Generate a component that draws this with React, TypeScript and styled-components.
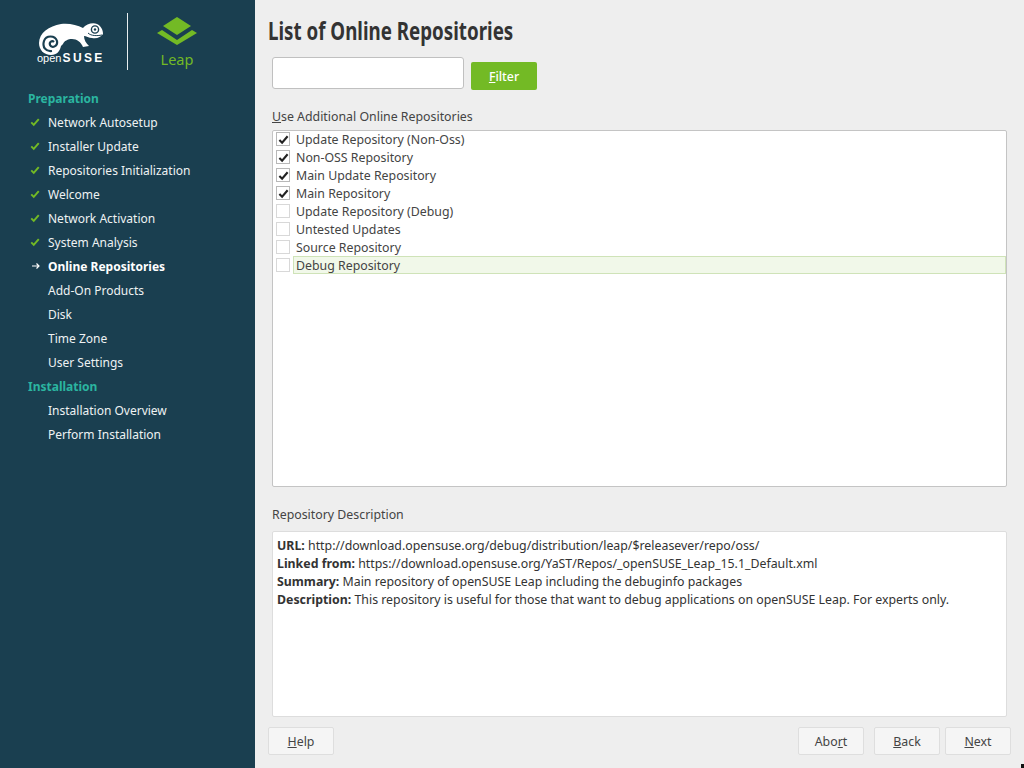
import React from 'react';
import styled, { createGlobalStyle } from 'styled-components';

const GlobalStyle = createGlobalStyle`
  html, body {
    margin: 0;
    padding: 0;
    height: 100%;
    overflow: hidden;
  }
  body {
    font-family: "Noto Sans", "Open Sans", sans-serif;
    font-size: 12.35px;
    color: #333;
    background: #eeeeee;
  }
`;

const Page = styled.div`
  position: relative;
  display: flex;
  width: 1024px;
  height: 768px;
`;

const Sidebar = styled.aside`
  width: 255px;
  flex: none;
  background: #1a3f50;
  color: #eef2f3;
  font-size: 12px;
`;

const LogoBar = styled.div`
  display: flex;
  height: 86px;
  padding-top: 13px;
  box-sizing: border-box;
`;

const SuseLogo = styled.div`
  width: 128px;
  height: 57px;
  flex: none;
  display: flex;
  flex-direction: column;
  align-items: flex-start;
  padding: 9px 0 0 37px;
  box-sizing: border-box;
  border-right: 1px solid #e8eef0;
`;

const SuseText = styled.div`
  font-family: "Liberation Sans", sans-serif;
  color: #fff;
  font-size: 11px;
  line-height: 12px;
  margin-top: -3px;
  white-space: nowrap;
  span {
    font-weight: 700;
    font-size: 12px;
    letter-spacing: 2.4px;
    margin-left: 1px;
  }
`;

const LeapLogo = styled.div`
  display: flex;
  flex-direction: column;
  align-items: center;
  margin-left: 29px;
  padding-top: 4px;
`;

const LeapText = styled.div`
  color: #73ba25;
  font-size: 14.5px;
  line-height: 18px;
  margin-top: 5px;
`;

const Steps = styled.nav`
  display: flex;
  flex-direction: column;
`;

const Heading = styled.div`
  height: 24px;
  line-height: 26px;
  padding-left: 28px;
  font-weight: 700;
  color: #2bb5a0;
`;

const Step = styled.div<{ $current?: boolean }>`
  display: flex;
  align-items: center;
  height: 24px;
  font-weight: ${(p) => (p.$current ? 700 : 400)};
  color: ${(p) => (p.$current ? '#fff' : '#eef2f3')};
`;

const StepMark = styled.span`
  width: 48px;
  flex: none;
  display: flex;
  justify-content: flex-end;
  padding-right: 8px;
  box-sizing: border-box;
`;

const Main = styled.main`
  flex: 1;
  display: flex;
  flex-direction: column;
  padding: 0 13px 13px;
  min-width: 0;
`;

const Title = styled.h1`
  margin: 0;
  height: 57px;
  line-height: 62px;
  font-size: 24.5px;
  font-weight: 700;
  color: #333;
  transform: scaleX(0.765);
  transform-origin: left center;
  white-space: nowrap;
`;

const Indented = styled.div`
  display: flex;
  flex-direction: column;
  padding: 0 4px;
`;

const FilterRow = styled.div`
  display: flex;
  align-items: flex-end;
  gap: 7px;
`;

const FilterInput = styled.input`
  width: 192px;
  height: 32px;
  box-sizing: border-box;
  background: #fff;
  border: 1px solid #c0c0c0;
  border-radius: 3px;
  outline: none;
`;

const FilterButton = styled.div`
  width: 66px;
  height: 28px;
  line-height: 30px;
  text-align: center;
  margin-bottom: -1px;
  border-radius: 2px;
  background: #73ba25;
  color: #fff;
  font-weight: 500;
`;

const Label = styled.div<{ $top: number; $bottom: number }>`
  height: 18px;
  line-height: 20px;
  margin-top: ${(p) => p.$top}px;
  margin-bottom: ${(p) => p.$bottom}px;
  color: #444;
`;

const RepoList = styled.div`
  height: 357px;
  box-sizing: border-box;
  background: #fff;
  border: 1px solid #c4c4c4;
  border-radius: 2px;
  padding: 0 0 0 3px;
`;

const RepoRows = styled.div`
  margin-top: -1px;
`;

const RepoRow = styled.div`
  display: flex;
  align-items: center;
  height: 18px;
`;

const Checkbox = styled.span<{ $checked?: boolean }>`
  width: 14px;
  height: 14px;
  flex: none;
  box-sizing: border-box;
  background: #fff;
  border: 1px solid ${(p) => (p.$checked ? '#b8b8b8' : '#d8d8d8')};
  margin-right: 3px;
  display: flex;
  align-items: center;
  justify-content: center;
`;

const RepoName = styled.span<{ $hover?: boolean }>`
  flex: 1;
  height: 18px;
  line-height: 18px;
  box-sizing: border-box;
  padding-left: 2px;
  border: 1px solid ${(p) => (p.$hover ? '#cfe3b8' : 'transparent')};
  background: ${(p) => (p.$hover ? '#f1f8e9' : 'transparent')};
  color: #444;
`;

const DescBox = styled.div`
  height: 186px;
  box-sizing: border-box;
  background: #fff;
  border: 1px solid #dddddd;
  border-radius: 2px;
  padding: 5px 4px;
  line-height: 18px;
  color: #333;
  b { font-weight: 700; }
`;

const Footer = styled.div`
  display: flex;
  align-items: center;
  margin-top: 10px;
`;

const FootButton = styled.div<{ $gap?: number }>`
  width: 66px;
  height: 28px;
  line-height: 27px;
  box-sizing: border-box;
  text-align: center;
  background: #f5f5f5;
  border: 1px solid #dedede;
  border-radius: 2px;
  color: #444;
  margin-left: ${(p) => p.$gap ?? 0}px;
`;

const Spacer = styled.div`
  flex: 1;
`;

const U = styled.span`
  text-decoration: underline;
`;

const MouseCursor = styled.div`
  position: absolute;
  left: 1021px;
  top: 764px;
  width: 3px;
  height: 4px;
  background: #111;
`;

const Check = ({ color, size }: { color: string; size: number }) => (
  <svg width={size} height={size} viewBox="0 0 12 12">
    <path d="M1.5 6.5 L4.5 9.5 L10.5 2.5" fill="none" stroke={color} strokeWidth="2.3" />
  </svg>
);

const Arrow = () => (
  <svg width="8" height="8" viewBox="0 0 8 8">
    <path d="M0 4 H6.5 M4.5 1.5 L7 4 L4.5 6.5" fill="none" stroke="#fff" strokeWidth="1.2" />
  </svg>
);

const Chameleon = () => (
  <svg width="67" height="33" viewBox="0 0 67 33">
    <path
      fill="#fff"
      d="M2 21 C2 11 12 4 24 2 C32 1 40 3 46 6 C49 2 56 0 60 2 C64 4 66 8 66 12 C64 15 60 17 55 16 C52 16 49 14 47 14 C47 18 49 21 52 24 L46 25 C44 20 40 17 35 17 C31 17 27 19 26 22 L24 24 C23 29 20 33 14 33 C7 33 2 28 2 21 Z"
    />
    <path
      fill="none"
      stroke="#1a3f50"
      strokeWidth="2.2"
      d="M15 29 C9 30 5 25 7 19 C9 13 18 13 20 19 C21 24 15 27 13 23 C12 20 15 18 17 20"
    />
    <circle cx="58" cy="7.5" r="3.6" fill="none" stroke="#1a3f50" strokeWidth="1.4" />
    <circle cx="58" cy="7.5" r="1.2" fill="#1a3f50" />
    <path d="M51 11 C54 14 60 14 65 13" fill="none" stroke="#1a3f50" strokeWidth="1" />
  </svg>
);

const LeapMark = () => (
  <svg width="40" height="28" viewBox="0 0 40 28">
    <path fill="#73ba25" d="M20 0 L34 9 L20 18 L6 9 Z" />
    <path fill="#73ba25" d="M0 16 L5 13 L20 23 L35 13 L40 16 L20 28 Z" />
  </svg>
);

const doneSteps = [
  'Network Autosetup',
  'Installer Update',
  'Repositories Initialization',
  'Welcome',
  'Network Activation',
  'System Analysis',
];

const repos = [
  { name: 'Update Repository (Non-Oss)', checked: true },
  { name: 'Non-OSS Repository', checked: true },
  { name: 'Main Update Repository', checked: true },
  { name: 'Main Repository', checked: true },
  { name: 'Update Repository (Debug)', checked: false },
  { name: 'Untested Updates', checked: false },
  { name: 'Source Repository', checked: false },
  { name: 'Debug Repository', checked: false, hover: true },
];

export default function App() {
  return (
    <Page>
      <GlobalStyle />
      <Sidebar>
        <LogoBar>
          <SuseLogo>
            <Chameleon />
            <SuseText>
              open<span>SUSE</span>
            </SuseText>
          </SuseLogo>
          <LeapLogo>
            <LeapMark />
            <LeapText>Leap</LeapText>
          </LeapLogo>
        </LogoBar>
        <Steps>
          <Heading>Preparation</Heading>
          {doneSteps.map((s) => (
            <Step key={s}>
              <StepMark>
                <Check color="#73ba25" size={10} />
              </StepMark>
              {s}
            </Step>
          ))}
          <Step $current>
            <StepMark>
              <Arrow />
            </StepMark>
            Online Repositories
          </Step>
          {['Add-On Products', 'Disk', 'Time Zone', 'User Settings'].map((s) => (
            <Step key={s}>
              <StepMark />
              {s}
            </Step>
          ))}
          <Heading>Installation</Heading>
          {['Installation Overview', 'Perform Installation'].map((s) => (
            <Step key={s}>
              <StepMark />
              {s}
            </Step>
          ))}
        </Steps>
      </Sidebar>
      <Main>
        <Title>List of Online Repositories</Title>
        <Indented>
          <FilterRow>
            <FilterInput />
            <FilterButton>
              <U>F</U>ilter
            </FilterButton>
          </FilterRow>
          <Label $top={18} $bottom={5}>
            <U>U</U>se Additional Online Repositories
          </Label>
          <RepoList>
            <RepoRows>
              {repos.map((r) => (
                <RepoRow key={r.name}>
                  <Checkbox $checked={r.checked}>{r.checked && <Check color="#222" size={11} />}</Checkbox>
                  <RepoName $hover={r.hover}>{r.name}</RepoName>
                </RepoRow>
              ))}
            </RepoRows>
          </RepoList>
          <Label $top={18} $bottom={8}>
            Repository Description
          </Label>
          <DescBox>
            <div>
              <b>URL:</b> http://download.opensuse.org/debug/distribution/leap/$releasever/repo/oss/
            </div>
            <div>
              <b>Linked from:</b> https://download.opensuse.org/YaST/Repos/_openSUSE_Leap_15.1_Default.xml
            </div>
            <div>
              <b>Summary:</b> Main repository of openSUSE Leap including the debuginfo packages
            </div>
            <div>
              <b>Description:</b> This repository is useful for those that want to debug applications on openSUSE Leap. For experts only.
            </div>
          </DescBox>
        </Indented>
        <Footer>
          <FootButton>
            <U>H</U>elp
          </FootButton>
          <Spacer />
          <FootButton>
            Abo<U>r</U>t
          </FootButton>
          <FootButton $gap={10}>
            <U>B</U>ack
          </FootButton>
          <FootButton $gap={5}>
            <U>N</U>ext
          </FootButton>
        </Footer>
      </Main>
      <MouseCursor />
    </Page>
  );
}
